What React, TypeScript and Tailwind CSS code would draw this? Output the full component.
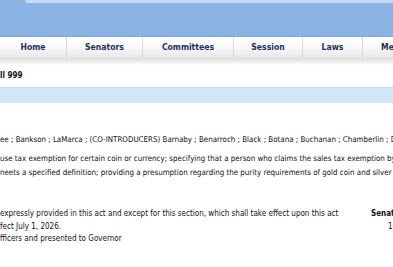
import React from "react";

const tabs = [
  { label: "Home", width: "w-[67px]" },
  { label: "Senators", width: "w-[76px]" },
  { label: "Committees", width: "w-[91px]" },
  { label: "Session", width: "w-[69px]" },
  { label: "Laws", width: "w-[60px]" },
];

export default function App() {
  return (
    <div className="w-[393px] h-[267px] overflow-hidden bg-white font-['DejaVu_Sans_Condensed','DejaVu_Sans',sans-serif] text-[8px] text-[#111]">
      {/* header band */}
      <div className="h-[37px] bg-[#8bb4e5] border-b border-[#7fa6d6]">
        <div className="ml-[25px] h-[3px] rounded-bl-[4px] bg-[#c6dbf3]" />
      </div>

      {/* nav */}
      <div className="flex h-[21px] bg-gradient-to-b from-white via-[#f8f8f8] to-[#e6e6e6] whitespace-nowrap">
        {tabs.map((t) => (
          <div
            key={t.label}
            className={`${t.width} shrink-0 flex items-center justify-center border-r border-[#d8d8d8] font-bold text-[8.6px] text-[#1f2f58]`}
          >
            {t.label}
          </div>
        ))}
        <div className="flex-1 flex items-center pl-[18px] font-bold text-[8.6px] text-[#1f2f58] overflow-hidden">
          Members
        </div>
      </div>
      <div className="h-[7px] bg-gradient-to-b from-[#dcdcdc] to-white" />

      <div className="mt-[6px] h-[10px] flex items-center font-bold whitespace-nowrap">ll 999</div>

      <div className="mt-[6px] h-[16px] bg-[#d4e6f9] border-t border-[#c4dbf3]" />

      <div className="mt-[31px] whitespace-nowrap leading-[12px] text-[7.9px]">
        ee ; Bankson ; LaMarca ; (CO-INTRODUCERS) Barnaby ; Benarroch ; Black ; Botana ; Buchanan ; Chamberlin ; Duggan
      </div>

      <div className="mt-[6px] whitespace-nowrap leading-[14px] text-[7.9px]">
        <div>use tax exemption for certain coin or currency; specifying that a person who claims the sales tax exemption by</div>
        <div>neets a specified definition; providing a presumption regarding the purity requirements of gold coin and silver coin</div>
      </div>

      <div className="mt-[28px] flex whitespace-nowrap leading-[12.6px]">
        <div className="w-[371px] shrink-0">
          <div>expressly provided in this act and except for this section, which shall take effect upon this act</div>
          <div>fect July 1, 2026.</div>
          <div>fficers and presented to Governor</div>
        </div>
        <div className="flex-1">
          <div className="font-bold">Senate</div>
          <div className="pl-[17px]">1.</div>
        </div>
      </div>
    </div>
  );
}
